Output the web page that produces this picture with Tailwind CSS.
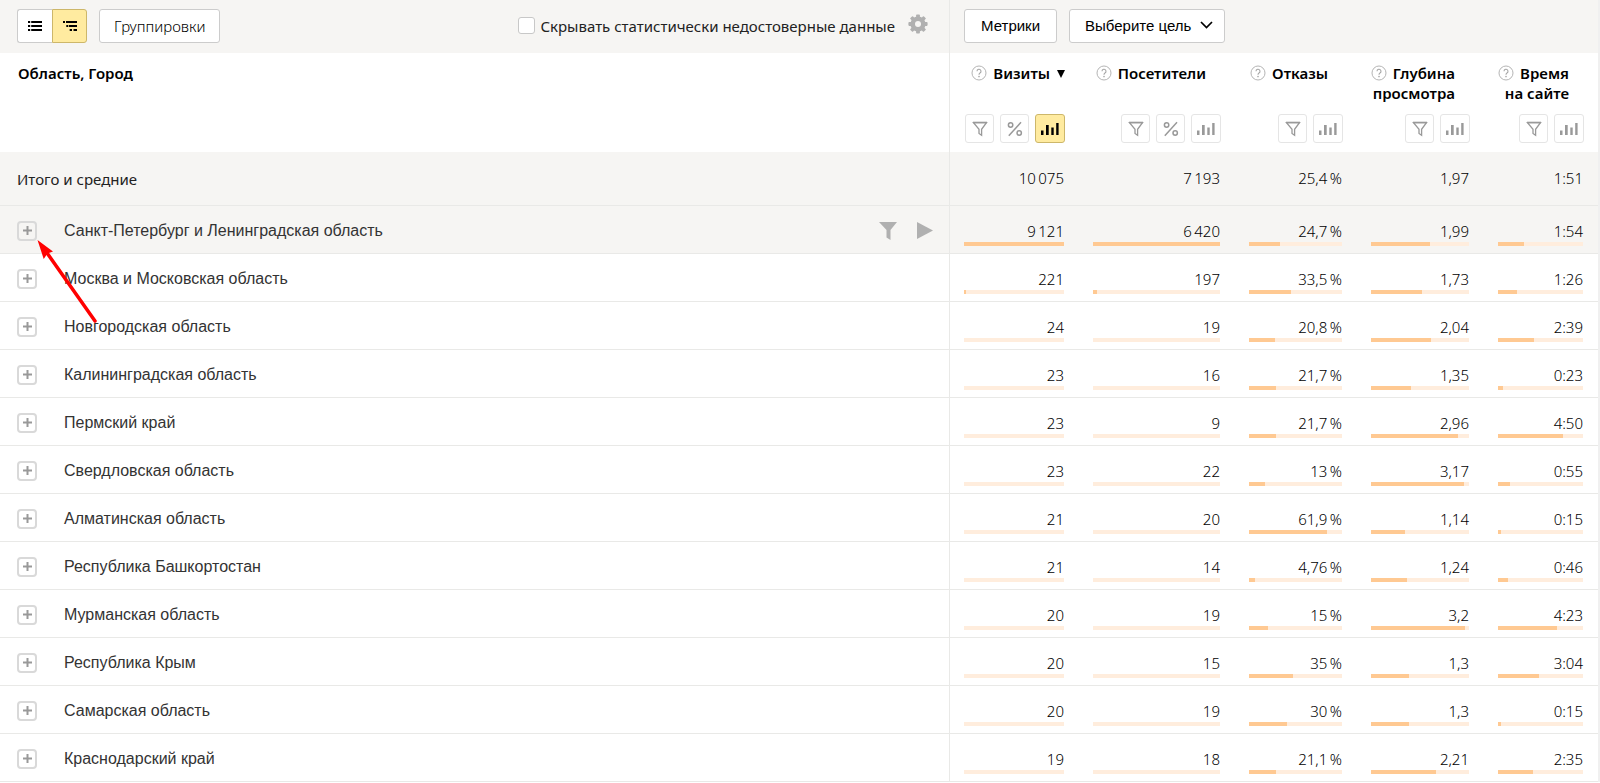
<!DOCTYPE html>
<html lang="ru">
<head>
<meta charset="utf-8">
<title>Отчёт: Область, Город</title>
<script src="https://cdn.jsdelivr.net/npm/@tailwindcss/browser@4"></script>
</head>
<body class="bg-white font-['Noto_Sans',sans-serif] text-[15px] leading-5 text-[#222]">

<svg class="hidden" aria-hidden="true">
  <symbol id="i-funnel" viewBox="0 0 16 16"><path d="M1.5 1.7h13L9.6 8.3v5.9l-2.6-1.7V8.3z" fill="none" stroke="currentColor" stroke-width="1.3"/><path d="M1 1.5h14" stroke="currentColor" stroke-width="1.6"/></symbol>
  <symbol id="i-percent" viewBox="0 0 16 16"><g fill="none" stroke="currentColor" stroke-width="1.5"><circle cx="3.6" cy="4" r="2.2"/><circle cx="12.2" cy="12" r="2.2"/><path d="M14 1.2 1.8 14.8"/></g></symbol>
  <symbol id="i-bars" viewBox="0 0 18 14"><path d="M0 8.500h2.500v4.500H0zM5 3h2.700v10H5zM10.300 5.500h2.400v7.500h-2.400zM15.200 1h2.400v12h-2.400z" fill="currentColor"/></symbol>
  <symbol id="i-help" viewBox="0 0 16 16"><circle cx="8" cy="8" r="7" fill="none" stroke="#b5b5b5"/><path d="M6 6.3a2 2 0 1 1 3 1.7c-.8.5-1 .8-1 1.7" fill="none" stroke="#a5a5a5" stroke-width="1.1"/><circle cx="8" cy="11.6" r=".8" fill="#a5a5a5"/></symbol>
  <symbol id="i-plus" viewBox="0 0 9 9"><path d="M0 4.5h9M4.5 0v9" stroke="#999" stroke-width="2"/></symbol>
</svg>

<div class="relative w-full overflow-hidden border-r-2 border-[#f0f0f0]">
  <div class="flex h-[53px] bg-[#f6f5f3]">
    <div class="flex min-w-0 flex-1 items-center pb-[2px] pl-[17px] pr-[21px]">
      <div class="flex h-[34px] shrink-0">
        <button type="button" aria-label="Список" class="flex w-[35px] items-center justify-center rounded-l-[3px] border border-r-0 border-[#ccc] bg-white">
          <svg class="h-[10px] w-[14px]" viewBox="0 0 14 10"><path d="M0 0h2.2v2H0zM3.2 0H14v2H3.2zM0 4h2.2v2H0zM3.2 4H14v2H3.2zM0 8h2.2v2H0zM3.2 8H14v2H3.2z"/></svg>
        </button>
        <button type="button" aria-label="Дерево" class="flex w-[35px] items-center justify-center rounded-r-[3px] border border-[#cdb76a] bg-[#ffeba0]">
          <svg class="h-[10px] w-[14px]" viewBox="0 0 14 10"><path d="M0 0h2v2H0zM3 0h11v2H3zM3.3 4h2v2h-2zM6 4h8v2H6zM6.700 8H9v2H6.700zM10.500 8H14v2h-3.500z"/></svg>
        </button>
      </div>
      <button type="button" class="ml-3 h-[34px] shrink-0 rounded-[3px] border border-[#ccc] bg-white px-[14px] font-light text-black">Группировки</button>
      <div class="ml-auto flex shrink-0 items-center">
        <input id="hide" type="checkbox" class="mr-[5px] size-[17px] appearance-none rounded-[3px] border border-[#c8c8c8] bg-white">
        <label for="hide">Скрывать статистически недостоверные данные</label>
        <button type="button" aria-label="Настройки" class="mb-1 ml-[13px] text-[#b0b0b0]">
          <svg class="size-5" viewBox="0 0 20 20"><g fill="currentColor"><rect x="8.100" y=".4" width="3.800" height="19.200" rx=".8"/><rect x="8.100" y=".4" width="3.800" height="19.200" rx=".8" transform="rotate(45 10 10)"/><rect x="8.100" y=".4" width="3.800" height="19.200" rx=".8" transform="rotate(90 10 10)"/><rect x="8.100" y=".4" width="3.800" height="19.200" rx=".8" transform="rotate(135 10 10)"/><circle cx="10" cy="10" r="7.600"/></g><circle cx="10" cy="10" r="3" fill="#f6f5f3"/></svg>
        </button>
      </div>
    </div>
    <div class="flex w-[649px] shrink-0 items-center gap-3 border-l border-[#e9e9e7] pb-[2px] pl-[14px] font-['Liberation_Sans',sans-serif] text-black">
      <button type="button" class="h-[34px] rounded-[3px] border border-[#ccc] bg-white px-4">Метрики</button>
      <div class="relative">
        <select aria-label="Выберите цель" class="h-[34px] w-[156px] appearance-none rounded-[3px] border border-[#ccc] bg-white pl-[15px]"><option>Выберите цель</option></select>
        <svg class="pointer-events-none absolute right-3 top-3 h-2 w-[13px]" viewBox="0 0 13 8"><path d="M1 1l5.500 5.500L12 1" fill="none" stroke="#000" stroke-width="1.700"/></svg>
      </div>
    </div>
  </div>

  <table class="w-full table-fixed border-collapse text-right">
    <colgroup><col><col class="w-[130px]"><col class="w-[156px]"><col class="w-[122px]"><col class="w-[127px]"><col class="w-[114px]"></colgroup>
    <thead><tr id="head" class="h-[99px] align-top font-semibold text-black">
      <th scope="col" class="border-r border-[#e9e9e7] pl-[18px] pt-[10px] text-left font-semibold">Область, Город</th>
    </tr></thead>
    <tbody id="body"></tbody>
  </table>

  <svg class="pointer-events-none absolute left-9 top-[238px] h-[86px] w-[62px]" viewBox="0 0 62 86"><path d="M10 13.500 59 83" stroke="#f00" stroke-width="3.500" stroke-linecap="round"/><path d="M1.500 2 17 13.500 11.500 15.500 7.700 21z" fill="#f00"/></svg>
</div>

<script>
const use = (id, cls) => `<svg class="${cls}" aria-hidden="true"><use href="#${id}"/></svg>`;
const heads = [
  ['Визиты', '', true, 'active'], ['Посетители', '', true], ['Отказы', '', false],
  ['Глубина', 'просмотра', false], ['Время', 'на сайте', false]
];
const small = 'flex h-[29px] w-[29px] items-center justify-center rounded-[3px] border border-[#e5e5e5] bg-white text-[#999]';
const wide = 'flex h-[29px] w-[30px] items-center justify-center rounded-[3px] border border-[#e5e5e5] bg-white text-[#999]';
const wideOn = 'flex h-[29px] w-[30px] items-center justify-center rounded-[3px] border border-[#cdb76a] bg-[#ffeba0] text-black';
document.getElementById('head').insertAdjacentHTML('beforeend', heads.map(([a, b, pct, on]) => `
  <th scope="col" class="pr-[14px] pt-[10px] font-semibold">
    <div class="relative h-[51px] whitespace-nowrap pr-[15px]">
      <div class="flex items-center justify-end gap-[6px]">${use('i-help', 'size-4')}<span>${a}</span></div>
      <div>${b}</div>
      ${on ? '<svg class="absolute right-0 top-[7px] size-2" viewBox="0 0 8 8"><path d="M0 0h8L4 8z"/></svg>' : ''}
    </div>
    <div class="flex justify-end gap-[6px]">
      <button type="button" aria-label="Фильтр" class="${small}">${use('i-funnel', 'size-4')}</button>
      ${pct ? `<button type="button" aria-label="Проценты" class="${small}">${use('i-percent', 'size-4')}</button>` : ''}
      <button type="button" aria-label="График" class="${on ? wideOn : wide}">${use('i-bars', 'h-[14px] w-[18px]')}</button>
    </div>
  </th>`).join(''));

const rows = [
  ['Санкт-Петербург и Ленинградская область', 9121, 6420, 24.7, 1.99, 114],
  ['Москва и Московская область', 221, 197, 33.5, 1.73, 86],
  ['Новгородская область', 24, 19, 20.8, 2.04, 159],
  ['Калининградская область', 23, 16, 21.7, 1.35, 23],
  ['Пермский край', 23, 9, 21.7, 2.96, 290],
  ['Свердловская область', 23, 22, 13, 3.17, 55],
  ['Алматинская область', 21, 20, 61.9, 1.14, 15],
  ['Республика Башкортостан', 21, 14, 4.76, 1.24, 46],
  ['Мурманская область', 20, 19, 15, 3.2, 263],
  ['Республика Крым', 20, 15, 35, 1.3, 184],
  ['Самарская область', 20, 19, 30, 1.3, 15],
  ['Краснодарский край', 19, 18, 21.1, 2.21, 155]
];
const num = n => String(n).replace('.', ',').replace(/^(\d+)(\d{3})$/, '$1\u2009$2');
const time = s => Math.floor(s / 60) + ':' + String(s % 60).padStart(2, '0');
const text = [num, num, n => num(n) + '\u2009%', num, time];
const share = [n => n / 91.21, n => n / 64.2, n => n * 1.35, n => n * 30, n => n * 0.265];

const total = [10075, 7193, 25.4, 1.97, 111];
let html = `<tr class="h-[53px] border-b border-[#e9e9e7] bg-[#f6f5f3]">
  <th scope="row" class="border-r border-[#e9e9e7] pl-[17px] pt-[2px] text-left font-normal">Итого и средние</th>
  ${total.map((v, i) => `<td class="pb-px pr-[15px] font-light text-black">${text[i](v)}</td>`).join('')}</tr>`;
rows.forEach((r, k) => {
  html += `<tr class="${k ? 'h-12 border-b border-[#e9e9e7]' : 'h-12 border-b border-[#e9e9e7] bg-[#f6f5f3]'}">
  <th scope="row" class="border-r border-[#e9e9e7] pl-[17px] pr-4 pt-[3px] text-left font-['Liberation_Sans',sans-serif] text-[16px] font-normal text-[#333]">
    <div class="flex items-center">
      <button type="button" aria-label="Раскрыть" class="mr-[27px] flex size-5 items-center justify-center rounded-[4px] border-2 border-[#d9d9d9]">${use('i-plus', 'size-[9px]')}</button>
      <span>${r[0]}</span>
      ${k ? '' : `<span class="ml-auto flex items-center gap-5 text-[#b0b0b0]">
        <button type="button" aria-label="Фильтр по строке"><svg class="h-[18px] w-[18px]" viewBox="0 0 18 18"><path d="M0 0h18l-6.500 8v10L7.500 15.500V8z" fill="currentColor"/></svg></button>
        <button type="button" aria-label="Показать"><svg class="h-[17px] w-4" viewBox="0 0 16 17"><path d="M0 0l16 8.500L0 17z" fill="currentColor"/></svg></button></span>`}
    </div>
  </th>
  ${r.slice(1).map((v, i) => {
    const p = share[i](v);
    return `<td class="pl-[14px] pr-[15px] pt-2 font-light text-black"><div class="mb-px">${text[i](v)}</div>
      <div class="h-1 bg-[#ffeddd]"><div class="h-1 bg-[#ffc992]" style="width:${p < 1 ? 0 : p.toFixed(1)}%"></div></div></td>`;
  }).join('')}</tr>`;
});
document.getElementById('body').innerHTML = html;
</script>
</body>
</html>
